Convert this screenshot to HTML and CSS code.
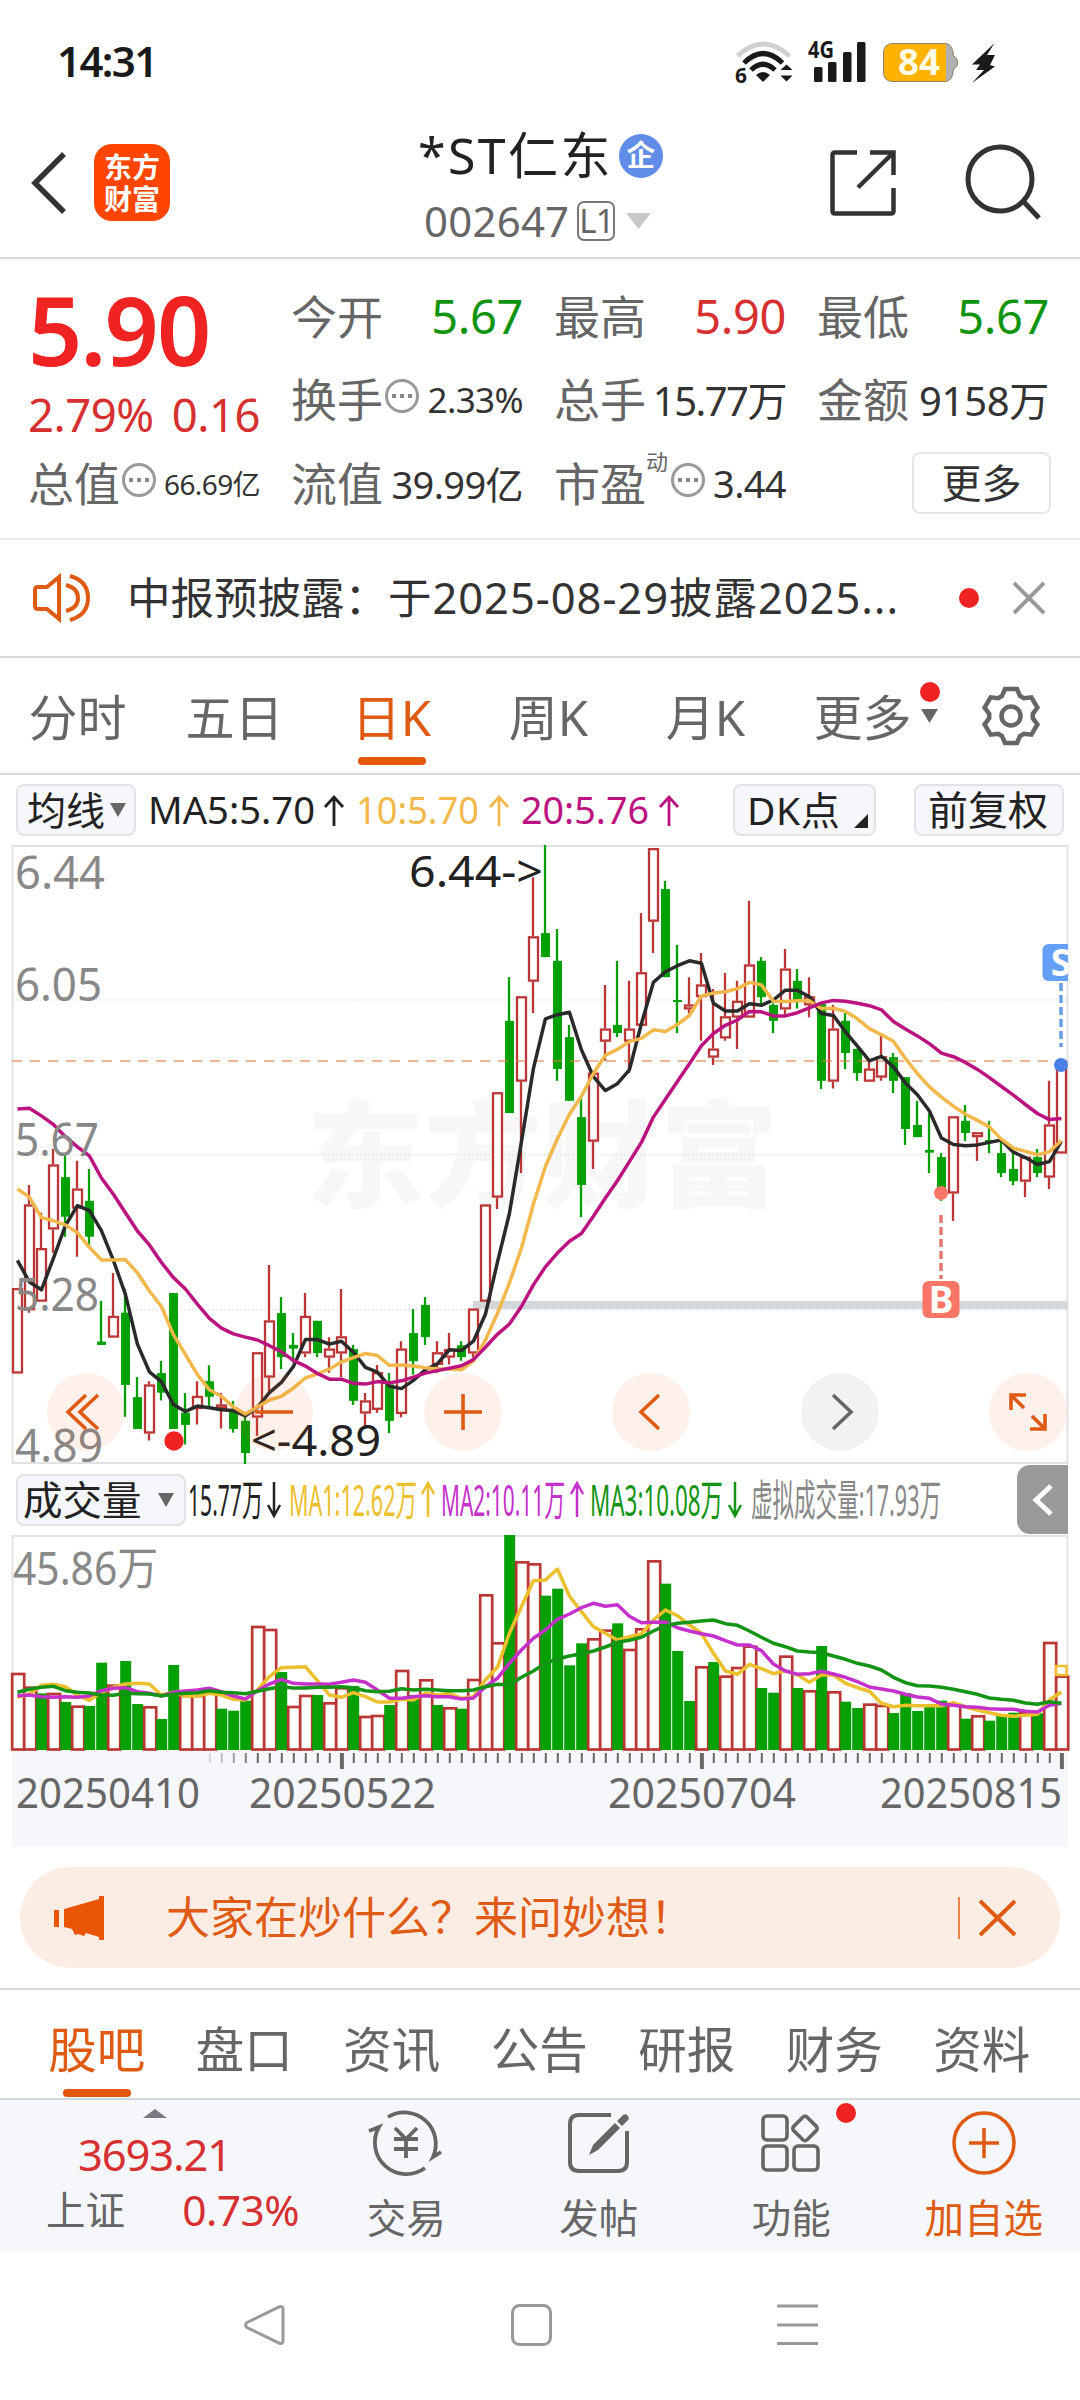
FILE: index.html
```
<!DOCTYPE html>
<html lang="zh-CN">
<head>
<meta charset="utf-8">
<title>*ST仁东 002647</title>
<link rel="stylesheet" href="styles.css">
</head>
<body>
<div class="status">
  <span class="clock">14:31</span>
  <svg class="status-icons" width="270" height="52" viewBox="730 36 270 52">
    <g fill="none" stroke="#1a1a1a" stroke-width="5">
      <path d="M737.500 56Q763 32 789.500 56" stroke="#d0d0d0"/>
      <path d="M744 63Q763 44 782.500 63"/>
      <path d="M751 70Q763 58.500 775 70"/>
    </g>
    <path d="M756 75Q763 69 770 75L763 82Z" fill="#1a1a1a"/>
    <path d="M780.500 70L786.500 64.500L792.500 70ZM780.500 75.500H792.500L786.500 81.500Z" fill="#1a1a1a"/>
    <text x="735" y="83" class="st-small" textLength="12" lengthAdjust="spacingAndGlyphs" font-size="22">6</text>
    <text x="808" y="58" class="st-small" textLength="26" lengthAdjust="spacingAndGlyphs" font-size="23">4G</text>
    <g fill="#1a1a1a"><rect x="814" y="67" width="8.500" height="15" rx="1.500"/><rect x="828" y="62" width="8.500" height="20" rx="1.500"/><rect x="843" y="52" width="8.500" height="30" rx="1.500"/><rect x="857" y="42" width="8.500" height="40" rx="1.500"/></g>
    <path d="M893 43.500H945Q953 43.500 953.500 56.500Q957.500 57 957.500 62.500T953.500 68.500Q953 81.500 945 81.500H893Q883.500 81.500 883.500 72V53Q883.500 43.500 893 43.500Z" fill="#b0b0b0" stroke="#8c8166"/>
    <path d="M893 44H946V81H893Q884 81 884 72V53Q884 44 893 44Z" fill="#ffb300"/>
    <text x="898" y="75" font-size="35" textLength="42" lengthAdjust="spacingAndGlyphs" class="st-small st-light">84</text>
    <path d="M994.500 43L972 64.500H980L976 70H984L972 83L995 66.500L990 65L995 55H987Z" fill="#1a1a1a"/>
  </svg>
</div>

<header class="header">
  <div class="head-left">
    <svg width="40" height="64" viewBox="0 0 40 64"><path d="M36 3L7 32L36 61" class="line dark" stroke-width="5.500"/></svg>
    <div class="logo"><span>东方</span><span>财富</span></div>
  </div>
  <div class="title">
    <div class="name"><span>*ST仁东</span><i class="corp">企</i></div>
    <div class="code"><span>002647</span><b class="level">L1</b><svg width="25" height="18" viewBox="0 0 25 18"><path d="M0 1H25L12.500 17Z" fill="#c8c8c8"/></svg></div>
  </div>
  <div class="head-right">
    <svg width="66" height="66" viewBox="0 0 66 66"><path d="M27 2.500H5Q2.500 2.500 2.500 5V61Q2.500 63.500 5 63.500H61Q63.500 63.500 63.500 61V38M40 2.500H63.500V25M62.500 3.500L28 37.500" class="line dark" stroke-width="4.500"/></svg>
    <svg width="77" height="77" viewBox="0 0 77 77"><circle cx="35" cy="35" r="32" class="line dark" stroke-width="5"/><path d="M58 57L74 74" class="line dark" stroke-width="5"/></svg>
  </div>
</header>

<section class="quote">
  <div class="last"><span class="price">5.90</span><span class="delta"><span>2.79%</span><span>0.16</span></span></div>
  <div class="cell"><label>今开</label><b class="v46 down">5.67</b></div>
  <div class="cell"><label>最高</label><b class="v46 up">5.90</b></div>
  <div class="cell"><label>最低</label><b class="v46 down">5.67</b></div>
  <div class="cell"><label>换手</label><i class="more"></i><b class="v34">2.33%</b></div>
  <div class="cell"><label>总手</label><b class="v38 tight">15.77万</b></div>
  <div class="cell"><label>金额</label><b class="v38">9158万</b></div>
  <div class="cell"><label>总值</label><i class="more"></i><b class="v28">66.69亿</b></div>
  <div class="cell"><label>流值</label><b class="v37">39.99亿</b></div>
  <div class="cell"><label>市盈</label><sup>动</sup><i class="more pe"></i><b class="v37">3.44</b></div>
  <div class="cell end"><button class="btn-more">更多</button></div>
</section>

<section class="notice">
  <svg width="60" height="54" viewBox="0 0 60 54"><g class="line orange" stroke-width="4"><path d="M27 6V48L15 38H6Q3 38 3 35V19Q3 16 6 16H15Z"/><path d="M34 14Q46 17 46 27T34 40M38 5Q56 10 56 27T38 49"/></g></svg>
  <p>中报预披露：<span>于2025-08-29披露2025...</span></p>
  <i class="dot"></i>
  <svg width="32" height="34" viewBox="0 0 32 34"><path d="M1 2L31 32M31 2L1 32" class="line" stroke="#999" stroke-width="4"/></svg>
</section>

<nav class="periods">
  <a>分时</a><a>五日</a><a class="on">日K</a><a>周K</a><a>月K</a>
  <a class="has-more">更多<svg width="18" height="14" viewBox="0 0 18 14"><path d="M0 0H17L8.500 14Z" fill="#666"/></svg><i class="dot"></i></a>
  <svg class="gear" width="60" height="60" viewBox="-30 -30 60 60"><path d="M-6-27H6L9-20L12.800-17.800L20.400-18.700L26.400-8.300L21.800-2.200V2.200L26.400 8.300L20.400 18.700L12.800 17.800L9 20L6 27H-6L-9 20L-12.800 17.800L-20.400 18.700L-26.400 8.300L-21.800 2.200V-2.200L-26.400-8.300L-20.400-18.700L-12.800-17.800L-9-20Z" class="line gray" stroke-width="4.500"/><circle r="9.500" class="line gray" stroke-width="4.500"/></svg>
</nav>

<section class="chart">
  <div class="ma-bar">
    <button class="chip c-ma">均线<svg width="16" height="14" viewBox="0 0 16 14"><path d="M0 0H16L8 14Z" fill="#666"/></svg></button>
    <svg class="ma-values" width="560" height="60" viewBox="145 780 560 60">
      <g font-size="39">
        <text x="148" y="824" textLength="167" lengthAdjust="spacingAndGlyphs" fill="#222">MA5:5.70</text>
        <text x="356" y="824" textLength="123" lengthAdjust="spacingAndGlyphs" fill="#f2b84b">10:5.70</text>
        <text x="521" y="824" textLength="128" lengthAdjust="spacingAndGlyphs" fill="#bb1380">20:5.76</text>
      </g>
      <g class="line" stroke-width="2.800"><path d="M334 826V797M325 807L334 797L343 807" stroke="#222"/><path d="M499 826V797M490 807L499 797L508 807" stroke="#f2b84b"/><path d="M669 826V797M660 807L669 797L678 807" stroke="#bb1380"/></g>
    </svg>
    <button class="chip c-dk">DK点</button>
    <button class="chip c-adj">前复权</button>
  </div>
  <div class="kline">
    <svg id="kline" width="1080" height="619" viewBox="0 845 1080 619"></svg>
    <div class="tools">
      <button><svg viewBox="-39 -39 78 78"><path d="M0-17L-18 0L0 17M12-17L-6 0L12 17"/></svg></button>
      <button><svg viewBox="-39 -39 78 78"><path d="M-19 0H19"/></svg></button>
      <button><svg viewBox="-39 -39 78 78"><path d="M-19 0H19M0-18V18"/></svg></button>
      <button><svg viewBox="-39 -39 78 78"><path d="M8-17L-10 0L8 17"/></svg></button>
      <button class="off"><svg viewBox="-39 -39 78 78"><path d="M-7-17L11 0L-7 17"/></svg></button>
      <button><svg viewBox="-39 -39 78 78"><path d="M-17-2V-17H-2M-16-16L-4-4M17 2V17H2M16 16L4 4"/></svg></button>
    </div>
  </div>
  <div class="vol-bar">
    <button class="chip c-vol">成交量<svg width="16" height="14" viewBox="0 0 16 14"><path d="M0 0H16L8 14Z" fill="#666"/></svg></button>
    <svg class="vol-values" width="800" height="60" viewBox="185 1470 800 60">
      <g font-size="43">
        <text x="188" y="1516" textLength="75" lengthAdjust="spacingAndGlyphs" fill="#222">15.77万</text>
        <text x="289" y="1516" textLength="128" lengthAdjust="spacingAndGlyphs" fill="#ecc02c">MA1:12.62万</text>
        <text x="441" y="1516" textLength="124" lengthAdjust="spacingAndGlyphs" fill="#c531cb">MA2:10.11万</text>
        <text x="590" y="1516" textLength="133" lengthAdjust="spacingAndGlyphs" fill="#149414">MA3:10.08万</text>
        <text x="751" y="1516" textLength="190" lengthAdjust="spacingAndGlyphs" fill="#888">虚拟成交量:17.93万</text>
      </g>
      <g class="line" stroke-width="2.500"><path d="M274 1482V1516M268 1505L274 1516L280 1505" stroke="#222"/><path d="M428 1517V1483M422 1494L428 1483L434 1494" stroke="#ecc02c"/><path d="M577 1517V1483M571 1494L577 1483L583 1494" stroke="#c531cb"/><path d="M735 1482V1516M729 1505L735 1516L741 1505" stroke="#149414"/></g>
    </svg>
    <button class="drawer"><svg width="24" height="34" viewBox="0 0 24 34"><path d="M20 3L5 17L20 31" class="line" stroke="#fff" stroke-width="5"/></svg></button>
  </div>
  <svg id="volume" width="1080" height="216" viewBox="0 1535 1080 216"></svg>
  <svg id="axis" width="1080" height="96" viewBox="0 1751 1080 96"></svg>
</section>

<section class="ask">
  <svg width="54" height="46" viewBox="0 0 54 46"><path d="M1 15H6V32H1ZM11 14L46 4V1H51V45H46V42L33 38L31 41L25 39L22 40L19 34L11 32Z" fill="#ea5504"/></svg>
  <p>大家在炒什么？来问妙想！</p>
  <i class="bar"></i>
  <svg width="38" height="38" viewBox="0 0 38 38"><path d="M1 2L36 36M36 2L1 36" class="line orange" stroke-width="4"/></svg>
</section>

<nav class="tabs"><a class="on">股吧</a><a>盘口</a><a>资讯</a><a>公告</a><a>研报</a><a>财务</a><a>资料</a></nav>

<footer class="dock">
  <div class="index">
    <svg width="24" height="9" viewBox="0 0 24 9"><path d="M0 9L12 0L24 9Z" fill="#777a80"/></svg>
    <span class="pts">3693.21</span>
    <span class="row"><span>上证</span><b>0.73%</b></span>
  </div>
  <a><svg width="76" height="70" viewBox="-38 -35 76 70"><g class="line gray" stroke-width="3.800"><path d="M-18-26A31.500 31.500 0 0 1 27 14L35 9M19 25A31.500 31.500 0 0 1-27-16L-37-12"/><path d="M-11-15L0-4L11-15M-12-4H12M-12 6H12M0-4V15"/></g></svg><span>交易</span></a>
  <a><svg width="76" height="70" viewBox="-38 -35 76 70"><path d="M12-28H-20Q-29-28-29-19V19Q-29 28-20 28H19Q28 28 28 19V-12" class="line gray" stroke-width="4"/><path d="M16-20L21-15L-1 7L-10 12L-6 2ZM18-22L24-28Q27-30 29-27T28-22L23-17Z" fill="#666"/></svg><span>发帖</span></a>
  <a><svg width="76" height="70" viewBox="-38 -35 76 70"><g class="line gray" stroke-width="3.600"><rect x="-28" y="-27" width="24" height="24" rx="4"/><rect x="-28" y="3" width="24" height="24" rx="4"/><rect x="3" y="3" width="24" height="24" rx="4"/><rect x="-9.500" y="-9.500" width="19" height="19" rx="3" transform="translate(14 -14.500) rotate(45)"/></g></svg><span>功能</span><i class="dot"></i></a>
  <a class="add"><svg width="76" height="70" viewBox="-38 -35 76 70"><g class="line orange" stroke-width="3.500"><circle r="30"/><path d="M-15 0H15M0-15V15"/></g></svg><span>加自选</span></a>
</footer>

<div class="sysnav">
  <svg width="42" height="42" viewBox="0 0 42 42"><path d="M3 18.500L35 3Q39 1.500 39 5V37Q39 40.500 35 39L3 23.500Q0 21 3 18.500Z"/></svg>
  <svg width="42" height="42" viewBox="0 0 42 42"><rect x="1.500" y="1.500" width="38" height="39" rx="7"/></svg>
  <svg width="42" height="42" viewBox="0 0 42 42"><path d="M0 2H41M0 21H41M0 39.500H41"/></svg>
</div>
<script src="chart.js"></script>
</body>
</html>
```
FILE: styles.css
```
* { box-sizing: border-box; }
body { margin: 0; width: 1080px; height: 2400px; overflow: hidden; background: #fff; color: #333; font-family: "Noto Sans", "Noto Sans CJK SC", sans-serif; display: flex; flex-direction: column; }
svg { display: block; flex: none; }
svg text { font-family: "Noto Sans", "Noto Sans CJK SC", sans-serif; }
button { font: inherit; color: inherit; border: 0; background: none; padding: 0; margin: 0; }
b, i { font-weight: 400; font-style: normal; }
p { margin: 0; white-space: nowrap; }
.line { fill: none; }
.dark { stroke: #333; }
.gray { stroke: #666; }
.orange { stroke: #df5a12; }
.dot { width: 20px; height: 20px; border-radius: 50%; background: #f02323; }

.status { height: 125px; display: flex; justify-content: space-between; padding: 36px 80px 0 57px; }
.clock { font-size: 42px; font-weight: 600; line-height: 50px; color: #1a1a1a; letter-spacing: -1.6px; }
.st-small { font-weight: 700; fill: #1a1a1a; }
.st-light { fill: #fffbe6; }

.header { height: 134px; border-bottom: 2px solid #d9d9d9; display: grid; grid-template-columns: 1fr 300px 1fr; align-items: start; }
.head-left { display: flex; align-items: center; gap: 26px; padding: 19px 0 0 28px; }
.logo { width: 76px; height: 77px; border-radius: 18px; background: #ff4500; color: #fff; font-size: 28px; font-weight: 700; line-height: 32px; display: flex; flex-direction: column; align-items: center; justify-content: center; }
.title { display: flex; flex-direction: column; padding-left: 28px; }
.name { height: 62px; display: flex; align-items: center; gap: 6px; font-size: 50px; line-height: 60px; letter-spacing: 2.4px; color: #222; white-space: nowrap; }
.name span { height: 62px; }
.corp { width: 44px; height: 44px; border-radius: 50%; background: #618ce8; color: #fff; font-size: 29px; font-weight: 700; line-height: 42px; letter-spacing: 0; text-align: center; }
.code { display: flex; align-items: center; height: 50px; margin-top: 9px; padding-left: 6px; font-size: 42px; line-height: 50px; color: #666; }
.code > span { letter-spacing: .2px; }
.level { width: 38px; height: 40px; margin: 0 11px 0 8px; border: 2px solid #777; border-radius: 7px; font-size: 33px; line-height: 35px; letter-spacing: -1px; text-align: center; }
.head-right { display: flex; justify-content: flex-end; align-items: center; gap: 69px; padding: 19px 38px 0 0; }

.quote { height: 281px; border-bottom: 2px solid #ececec; padding: 15px 30px 0 28px; display: grid; grid-template-columns: 232px repeat(3, 232px); column-gap: 31px; grid-template-rows: repeat(3, 83.5px); }
.last { grid-row: 1 / 3; display: flex; flex-direction: column; }
.price { height: 114px; line-height: 110px; font-size: 95px; font-weight: 600; color: #f02323; letter-spacing: -2px; }
.delta { display: flex; justify-content: space-between; font-size: 45.5px; line-height: 54px; color: #d63031; letter-spacing: -.5px; }
.cell { display: flex; align-items: center; justify-content: space-between; white-space: nowrap; position: relative; }
.cell label { font-size: 46px; color: #666; line-height: 60px; }
.cell .more { width: 34px; height: 34px; margin: -6px auto 0 2px; border: 3px solid #999; border-radius: 50%; background: radial-gradient(circle 2.500px, #888 90%, transparent) 2px 0 / 8px 28px repeat-x; }
.cell sup { font-size: 22px; line-height: 24px; color: #666; margin-bottom: 44px; }
.cell .more.pe { margin-left: 3px; }
.v46 { font-size: 47px; letter-spacing: -.4px; } .v38 { font-size: 40px; letter-spacing: -.3px; } .v38.tight { letter-spacing: -1.5px; } .v37 { font-size: 38px; letter-spacing: -.6px; } .v34 { font-size: 35px; letter-spacing: -.6px; } .v28 { font-size: 28px; letter-spacing: -.6px; }
.up { color: #d63031; } .down { color: #109410; }
.cell.end { justify-content: flex-end; }
.btn-more { width: 139px; height: 62px; margin-right: -2px; border: 2px solid #e4e6e8; border-radius: 8px; font-size: 40px; line-height: 56px; }

.notice { height: 118px; border-bottom: 2px solid #d9d9d9; display: flex; align-items: center; padding: 0 35px 0 32px; }
.notice p { margin-left: 35px; font-size: 43.500px; line-height: 58px; width: 832px; padding-bottom: 2px; }
.notice p span { letter-spacing: .95px; }
.notice .dot { margin-right: 34px; }

.periods { height: 117px; border-bottom: 2px solid #d9d9d9; display: grid; grid-template-columns: repeat(6, 157px) 1fr; font-size: 49px; color: #666; }
.periods a { position: relative; text-align: center; line-height: 118px; white-space: nowrap; left: -1px; }
.periods .on, .tabs .on { color: #df5a12; }
.periods .on::after, .tabs .on::after { content: ""; position: absolute; left: 50%; margin-left: -34px; width: 68px; height: 8px; border-radius: 4px; background: #e4560b; }
.periods .on::after { top: 99px; }
.has-more svg { position: absolute; left: 137px; top: 51px; }
.has-more .dot { position: absolute; left: 136px; top: 24px; }
.gear { margin: 28px 0 0 39px; }

.chart { height: 1072px; }
.ma-bar { height: 70px; display: flex; align-items: center; padding-left: 16px; }
.chip { flex: none; height: 52px; border: 2px solid #e1e3e8; border-radius: 8px; background: #f6f7fa; color: #222; font-size: 39px; line-height: 44px; display: flex; align-items: center; white-space: nowrap; }
.c-ma { width: 120px; padding-left: 9px; gap: 5px; }
.ma-values { margin-left: 9px; }
.c-dk { width: 143px; margin-left: 28px; padding-left: 12px; position: relative; letter-spacing: .6px; }
.c-dk::after { content: ""; position: absolute; right: 6px; bottom: 6px; border: 7px solid transparent; border-right-color: #222; border-bottom-color: #222; }
.c-adj { width: 150px; margin-left: 38px; padding-left: 12px; font-size: 40px; }
.kline { position: relative; height: 619px; }
.tools { position: absolute; left: 47px; top: 528px; width: 1020px; display: flex; justify-content: space-between; }
.tools button { width: 78px; height: 78px; border-radius: 50%; background: rgba(240, 100, 30, .09); }
.tools path { fill: none; stroke: #df5a12; stroke-width: 3.600; }
.tools .off { background: rgba(0, 0, 0, .05); }
.tools .off path { stroke: #666; }
.vol-bar { height: 71px; display: flex; align-items: center; padding-left: 16px; }
.c-vol { width: 170px; padding-left: 5px; gap: 16px; font-size: 39.500px; }
.vol-values { margin-left: -1px; }
.drawer { flex: none; width: 51px; height: 69px; margin-left: 32px; border-radius: 13px 0 0 13px; background: #999; display: flex; align-items: center; justify-content: center; }

.ask { height: 101px; margin: 20px 20px 0; border-radius: 50px; background: #fcede4; display: flex; align-items: center; padding: 0 43px 0 33px; color: #df5a12; font-size: 44px; line-height: 60px; }
.ask p { margin-left: 59px; padding-bottom: 2px; }
.ask .bar { width: 2px; height: 42px; margin: 0 19px 0 auto; background: #e8834c; }

.tabs { flex: none; height: 112px; margin-top: 20px; border-top: 2px solid #d9d9dc; border-bottom: 2px solid #d3d7de; display: grid; grid-template-columns: repeat(7, 147.500px); padding-left: 23px; font-size: 48.500px; color: #666; }
.tabs a { position: relative; text-align: center; line-height: 118px; }
.tabs .on::after { top: 99px; }

.dock { flex: none; height: 151px; background: #f6f7fa; display: grid; grid-template-columns: 309px repeat(4, 192.500px); color: #666; font-size: 39.500px; }
.index { display: flex; flex-direction: column; align-items: center; padding-top: 9px; }
.pts { color: #d63031; font-size: 43.5px; line-height: 58px; margin-top: 7px; letter-spacing: -1.1px; }
.index .row { width: 253px; display: flex; justify-content: space-between; line-height: 50px; margin: 2px 0 0 36px; }
.row b { color: #d63031; font-size: 42.5px; letter-spacing: -.6px; }
.dock a { position: relative; display: flex; flex-direction: column; align-items: center; padding-top: 8px; left: 1px; }
.dock a > span { line-height: 56px; margin-top: 12px; }
.dock .dot { position: absolute; left: 141px; top: 3px; }
.add { color: #df5a12; }
.sysnav { display: flex; justify-content: space-between; padding: 53px 261px 0 244px; }
.sysnav svg { fill: none; stroke: #999; stroke-width: 3; }

.txt-axis { fill: #888; font-size: 45px; }
.txt-date { fill: #666; font-size: 41px; }
.txt-mark { fill: #222; font-size: 44px; }
```
FILE: chart.js
```
// One entry per trading day: direction, high, body top, body bottom, low.
const candles = `r 1098 1098 1307 1307|r 845 893 1152 1158|r 913 1000 1131 1131|r 757 795 954 1011|g 774 826 923 972|r 786 854 903 1021|g 806 884 972 998|g 1129 1229 1237 1237|r 1061 1166 1219 1219|g 1100 1158 1335 1413|g 1316 1365 1443 1443|r 1326 1334 1454 1471|g 1276 1306 1354 1373|g 1110 1110 1443 1443|g 1355 1403 1433 1481|r 1326 1362 1394 1432|g 1287 1326 1364 1390|r 1355 1383 1394 1442|g 1374 1394 1443 1452|g 1413 1423 1502 1530|r 1255 1255 1415 1460|r 1041 1177 1317 1352|g 1120 1159 1267 1296|g 1208 1237 1246 1280|r 1110 1166 1258 1267|g 1178 1178 1257 1267|r 1218 1246 1268 1305|r 1100 1216 1258 1316|g 1237 1247 1374 1384|r 1355 1373 1405 1442|r 1286 1304 1396 1403|g 1306 1334 1423 1453|r 1228 1246 1406 1414|g 1149 1208 1277 1310|g 1120 1139 1218 1237|r 1228 1255 1286 1305|r 1208 1247 1268 1285|g 1228 1238 1267 1276|r 1148 1148 1258 1268|r 893 893 1131 1131|r 618 618 876 904|g 336 443 669 669|r 383 383 592 816|r 91 236 347 424|g 12 228 287 287|g 218 296 561 590|g 453 483 639 639|g 630 679 845 924|r 570 570 739 806|r 355 462 494 541|g 296 453 473 483|r 345 462 494 571|r 179 324 455 455|r 20 20 200 277|g 100 120 336 336|g 257 392 397 473|r 336 403 415 425|r 277 354 385 492|r 365 511 533 551|r 326 432 486 492|r 345 394 435 512|r 149 305 435 435|g 287 296 385 405|g 400 404 443 473|r 267 315 415 430|g 316 345 395 413|r 336 383 405 434|g 398 402 590 610|r 404 462 592 609|g 423 443 522 561|g 511 512 571 590|r 540 560 592 592|r 475 530 582 590|g 522 532 590 620|g 581 581 708 747|g 639 698 728 728|g 670 759 766 816|g 767 777 855 884|r 677 677 866 933|g 649 688 718 737|r 716 716 728 786|g 688 735 740 767|g 735 767 816 826|g 767 806 836 846|r 776 776 837 875|g 757 777 816 826|r 590 697 827 855|r 541 541 768 768`.split('|').map(s => s.split(' '));
const ma5 = [1030,1083,1102,1025,945,896,908,957,1030,1113,1235,1303,1327,1383,1400,1387,1391,1396,1398,1411,1390,1354,1329,1290,1224,1224,1235,1228,1255,1292,1304,1338,1344,1324,1298,1283,1249,1251,1228,1162,1035,915,740,560,438,428,422,514,580,614,597,563,450,349,323,308,296,302,400,419,419,401,405,392,368,368,384,425,430,470,505,541,530,556,595,624,664,730,746,749,747,741,735,765,778,795,788,738];
const ma10 = [855,875,925,933,943,962,998,1029,1029,1028,1060,1105,1143,1212,1260,1310,1347,1363,1389,1406,1389,1372,1363,1343,1318,1308,1296,1279,1268,1258,1263,1287,1286,1289,1293,1296,1296,1298,1276,1225,1160,1085,1000,892,800,732,672,628,572,527,513,494,486,465,469,452,430,382,375,372,364,349,355,395,396,394,394,413,412,420,438,462,477,493,535,572,605,630,652,672,687,703,733,755,763,771,764,736];
const ma20 = [659,657,676,697,727,752,774,828,868,913,958,992,1035,1072,1100,1137,1172,1196,1210,1218,1225,1239,1254,1275,1289,1307,1321,1321,1331,1333,1327,1330,1325,1316,1306,1300,1294,1288,1273,1243,1211,1186,1143,1090,1046,1012,983,964,922,877,835,788,741,679,635,592,548,504,474,454,441,420,421,431,431,423,411,399,393,395,400,406,416,445,463,480,499,522,531,545,562,582,604,625,648,670,685,682];
const volumes = 'r669 r710 g730 r729 g756 r767 g768 g638 r704 g633 g762 r769 g807 g645 r735 r735 r725 g776 g782 g752 r528 r537 g666 r768 r735 g735 r757 r712 g708 r798 r795 g765 r660 g735 r688 g765 r772 g776 r687 r433 r577 g255 r334 r340 g437 g416 g646 g580 r565 r539 g520 r597 r535 r331 g401 g603 g753 r649 g636 r677 r651 r587 g714 g728 r617 g714 r721 g588 r724 g755 g774 r761 r765 g789 g729 g783 g770 g752 r762 g806 r796 g812 g795 g788 r785 g790 r576 r677'.split(' ');
const vma1 = [742,732,706,703,710,735,751,727,712,702,700,702,735,727,738,738,730,735,748,750,720,680,653,652,650,692,735,742,728,740,756,756,748,750,730,735,730,745,740,690,652,550,470,392,390,357,438,485,530,550,570,560,552,510,480,497,525,550,610,663,673,643,656,671,662,674,697,675,675,700,713,724,760,770,766,767,767,767,758,770,780,788,796,799,796,793,750,726];
const vma2 = [737,735,740,742,740,742,738,722,715,713,725,730,738,727,723,720,715,725,738,747,722,702,688,700,702,702,703,697,690,697,720,745,745,740,737,740,740,747,744,710,685,640,600,565,540,508,492,473,460,469,464,499,518,517,516,533,543,551,558,572,585,585,602,642,663,673,671,664,672,682,695,711,717,723,733,741,745,762,766,770,772,776,778,778,784,786,766,760];
const vma3 = [727,718,712,709,722,727,729,735,736,730,731,732,737,733,730,728,722,727,728,731,724,716,710,714,714,712,712,710,713,722,725,724,716,720,718,720,722,722,720,710,703,705,682,663,640,627,618,611,603,591,577,571,562,543,527,520,517,513,510,521,526,543,562,580,590,603,606,608,618,628,640,648,660,682,698,707,708,712,718,725,733,744,748,751,759,763,755,760];

const RED = '#bb3735', GREEN = '#04a004';
const X = n => 17.4 + n * 12;
const P = v => 840 + v / 2.45;
const V = v => 1450 + v / 3;
const line = (data, y, color) => `<polyline points="${data.map((v, n) => X(n).toFixed(1) + ',' + y(v).toFixed(1)).join(' ')}" fill="none" stroke="${color}" stroke-width="3.5" stroke-linejoin="round"/>`;
const text = (s, x, y, w, cls) => `<text x="${x}" y="${y}" textLength="${w}" lengthAdjust="spacingAndGlyphs" class="${cls}">${s}</text>`;

let k = '<text x="306" y="1198" textLength="472" lengthAdjust="spacingAndGlyphs" font-size="116" font-weight="900" fill="#f7f7f7">东方财富</text>';
k += '<path d="M12 846H1067.500V1463H12.500V846" fill="none" stroke="#e2e2e2" stroke-width="2"/>';
k += '<path d="M12 1000H1067M12 1154.700H1067M12 1309.800H1067" stroke="#dcdcdc" stroke-dasharray="2 2"/>';
k += '<path d="M473 1305H1067" stroke="#d3d7dc" stroke-width="8"/>';
candles.forEach(([dir, hi, top, bot, lo], n) => {
  const x = X(n) - .4, t = P(+top), b = P(+bot);
  if (dir === 'g') {
    k += `<path d="M${x} ${P(+hi)}V${P(+lo)}" stroke="${GREEN}" stroke-width="2.3"/><rect x="${x - 4}" y="${t}" width="9" height="${Math.max(2, b - t)}" fill="${GREEN}"/>`;
  } else {
    k += `<path d="M${x} ${P(+hi)}V${t}M${x} ${b}V${P(+lo)}" stroke="${RED}" stroke-width="2.3"/><rect x="${x - 4}" y="${t + 1}" width="9" height="${Math.max(2, b - t - 2)}" fill="#fff" stroke="${RED}" stroke-width="2.3"/>`;
  }
});
k += '<path d="M12 1061H1067" stroke="#df7b42" stroke-opacity=".55" stroke-width="2" stroke-dasharray="10 8"/>';
k += line(ma5, P, '#2a2a2a') + line(ma10, P, '#f2b84b') + line(ma20, P, '#bb1380');
k += text('6.44', 15, 889, 90, 'txt-axis') + text('6.05', 15, 1001, 87, 'txt-axis') + text('5.67', 15, 1156, 84, 'txt-axis') + text('5.28', 15, 1311, 84, 'txt-axis') + text('4.89', 15, 1462, 88, 'txt-axis');
k += text('6.44-&gt;', 409, 887, 134, 'txt-mark') + text('&lt;-4.89', 251, 1456, 130, 'txt-mark');
k += '<circle cx="174" cy="1441" r="9.700" fill="#f02323"/><circle cx="941" cy="1193" r="7" fill="#fb7666"/><circle cx="1061" cy="1065" r="7" fill="#4a80e6"/>';
k += '<path d="M941 1215V1279" stroke="#e2796c" stroke-width="3.500" stroke-dasharray="8 4"/><path d="M1061 983V1047" stroke="#6a9fe8" stroke-width="3.500" stroke-dasharray="8 4"/>';
k += '<rect x="922.500" y="1281" width="37" height="37" rx="6" fill="#fb7666"/><text x="941" y="1313" text-anchor="middle" font-size="37" font-weight="700" fill="#fff">B</text>';
k += '<svg x="1040" y="940" width="28" height="44" viewBox="1040 940 28 44"><rect x="1042.500" y="944" width="37" height="37" rx="6" fill="#64a0f8"/><text x="1061" y="976" text-anchor="middle" font-size="37" font-weight="700" fill="#fff">S</text></svg>';
document.getElementById('kline').innerHTML = k;

let v = '<path d="M12.500 1750V1536H1067.500V1750" fill="none" stroke="#e2e2e2" stroke-width="2"/>' + text('45.86万', 13, 1585, 145, 'txt-axis');
volumes.forEach((s, n) => {
  const y = V(+s.slice(1)), x = X(n) - 5.4;
  v += s[0] === 'g'
    ? `<rect x="${x + .2}" y="${y}" width="11" height="${1750 - y}" fill="${GREEN}"/>`
    : `<rect x="${x + .2}" y="${y + 1}" width="12" height="${1748.500 - y}" fill="#fff" stroke="${RED}" stroke-width="2.700"/>`;
});
v += '<rect x="1056" y="1666" width="10.500" height="9" fill="#fff" stroke="#f4be2c" stroke-width="2.500"/>';
v += line(vma1, V, '#ecc02c') + line(vma2, V, '#c531cb') + line(vma3, V, '#149414');
document.getElementById('volume').innerHTML = v;

let a = '<rect x="12" y="1751" width="1056" height="96" fill="#f6f7fa"/>';
for (let n = 16; n < 88; n++) {
  const major = n % 30 === 27;
  a += `<rect x="${X(n) - (major ? 1.500 : .6)}" y="1753" width="${major ? 4 : 2}" height="${major ? 16 : 10}" fill="#666" opacity="${Math.min(1, (n - 15) / 5)}"/>`;
}
a += text('20250410', 16, 1808, 184, 'txt-date') + text('20250522', 249, 1808, 187, 'txt-date') + text('20250704', 608, 1808, 188, 'txt-date') + text('20250815', 880, 1808, 182, 'txt-date');
document.getElementById('axis').innerHTML = a;
```
